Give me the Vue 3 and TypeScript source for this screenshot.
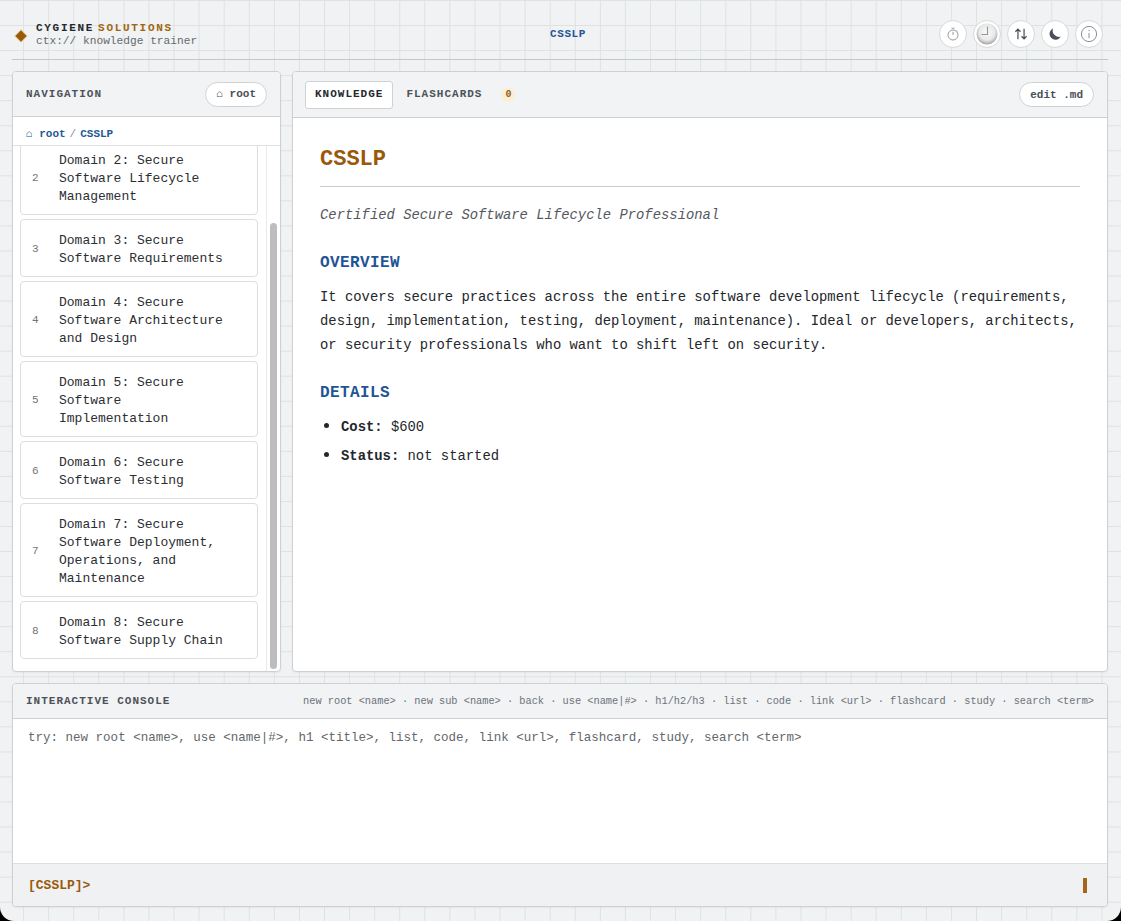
<script setup lang="ts">
import { computed, onMounted, ref } from 'vue'

interface Domain {
  id: number
  title: string
}

const domains: Domain[] = [
  { id: 1, title: 'Domain 1: Secure Software Concepts' },
  { id: 2, title: 'Domain 2: Secure Software Lifecycle Management' },
  { id: 3, title: 'Domain 3: Secure Software Requirements' },
  { id: 4, title: 'Domain 4: Secure Software Architecture and Design' },
  { id: 5, title: 'Domain 5: Secure Software Implementation' },
  { id: 6, title: 'Domain 6: Secure Software Testing' },
  { id: 7, title: 'Domain 7: Secure Software Deployment, Operations, and Maintenance' },
  { id: 8, title: 'Domain 8: Secure Software Supply Chain' }
]

const hints = [
  'new root <name>',
  'new sub <name>',
  'back',
  'use <name|#>',
  'h1/h2/h3',
  'list',
  'code',
  'link <url>',
  'flashcard',
  'study',
  'search <term>'
]

const listRef = ref<HTMLElement>()
const railRef = ref<HTMLElement>()
const scroll = ref({ top: 0, client: 1, total: 1, rail: 0 })

const syncThumb = () => {
  const el = listRef.value
  if (!el || !railRef.value) return
  scroll.value = {
    top: el.scrollTop,
    client: el.clientHeight,
    total: el.scrollHeight,
    rail: railRef.value.clientHeight - 4
  }
}

const thumbStyle = computed(() => ({
  height: `${(scroll.value.client / scroll.value.total) * scroll.value.rail}px`,
  marginTop: `${(scroll.value.top / scroll.value.total) * scroll.value.rail}px`
}))

onMounted(() => {
  if (listRef.value) listRef.value.scrollTop = listRef.value.scrollHeight
  syncThumb()
})
</script>

<template>
  <div class="shell">
    <header class="topbar">
      <div class="brand">
        <span class="diamond"></span>
        <div>
          <div class="brand-name">CYGIENE<span class="accent">SOLUTIONS</span></div>
          <div class="brand-sub">ctx:// knowledge trainer</div>
        </div>
      </div>
      <div class="crumb-center">CSSLP</div>
      <div class="tools">
        <button class="tool">
          <svg width="14" height="14" viewBox="0 0 14 14" fill="none" stroke="#8a8f94" stroke-width="0.9">
            <circle cx="7" cy="8" r="5" />
            <path d="M5.5 1.2h3M7 8V4.8M10.8 3.4l.9.9" />
          </svg>
        </button>
        <button class="tool">
          <svg width="24" height="24" viewBox="0 0 24 24">
            <defs>
              <radialGradient id="clockFace" cx="50%" cy="42%" r="58%">
                <stop offset="0%" stop-color="#fbfbfb" />
                <stop offset="65%" stop-color="#e8e8e8" />
                <stop offset="100%" stop-color="#a3a3a3" />
              </radialGradient>
            </defs>
            <circle cx="12" cy="12" r="10.5" fill="url(#clockFace)" />
            <path d="M12.5 4.5v8H6.5" fill="none" stroke="#989898" stroke-width="1.2" />
          </svg>
        </button>
        <button class="tool">
          <svg width="14" height="14" viewBox="0 0 16 16" fill="none" stroke="#4a4f57" stroke-width="1.4">
            <path d="M4.5 14V2.5M1.6 5.4l2.9-3 2.9 3M11.5 2v11.5M8.6 10.6l2.9 3 2.9-3" />
          </svg>
        </button>
        <button class="tool">
          <svg width="14" height="14" viewBox="0 0 14 14">
            <path d="M5.2 1.2A6 6 0 1 0 12.8 9.6 6.2 6.2 0 0 1 5.2 1.2Z" fill="#4a4f5c" />
          </svg>
        </button>
        <button class="tool">
          <svg width="18" height="18" viewBox="0 0 18 18" fill="none" stroke="#7d8287" stroke-width="0.9">
            <circle cx="9" cy="9" r="7.6" />
            <path d="M9 8v5.2M9 5v1.1" />
          </svg>
        </button>
      </div>
    </header>

    <div class="workspace">
      <aside class="panel nav">
        <div class="panel-head nav-head">
          <span class="label">NAVIGATION</span>
          <button class="pill">⌂ root</button>
        </div>
        <div class="breadcrumb">
          <span>⌂ root</span><span class="sep">/</span><span>CSSLP</span>
        </div>
        <div class="list-wrap">
          <div ref="listRef" class="list" @scroll="syncThumb">
            <div v-for="d in domains" :key="d.id" class="item">
              <span class="num">{{ d.id }}</span>
              <span class="item-title">{{ d.title }}</span>
            </div>
          </div>
          <div ref="railRef" class="rail">
            <div class="thumb" :style="thumbStyle"></div>
          </div>
        </div>
      </aside>

      <main class="panel main">
        <div class="panel-head main-head">
          <div class="tabs">
            <span class="tab active">KNOWLEDGE</span>
            <span class="tab">FLASHCARDS</span>
            <span class="badge">0</span>
          </div>
          <button class="pill">edit .md</button>
        </div>
        <article class="doc">
          <h1>CSSLP</h1>
          <p class="subtitle">Certified Secure Software Lifecycle Professional</p>
          <h2>OVERVIEW</h2>
          <p>
            It covers secure practices across the entire software development lifecycle (requirements,
            design, implementation, testing, deployment, maintenance). Ideal or developers, architects,
            or security professionals who want to shift left on security.
          </p>
          <h2>DETAILS</h2>
          <ul>
            <li><strong>Cost:</strong> $600</li>
            <li><strong>Status:</strong> not started</li>
          </ul>
        </article>
      </main>
    </div>

    <section class="panel console">
      <div class="panel-head console-head">
        <span class="label">INTERACTIVE CONSOLE</span>
        <span class="hints">{{ hints.join(' · ') }}</span>
      </div>
      <div class="output">try: new root &lt;name&gt;, use &lt;name|#&gt;, h1 &lt;title&gt;, list, code, link &lt;url&gt;, flashcard, study, search &lt;term&gt;</div>
      <div class="prompt">
        <span>[CSSLP]&gt;</span>
        <span class="cursor"></span>
      </div>
    </section>
  </div>
</template>

<style>
html,
body {
  margin: 0;
  background: #000;
}
</style>

<style scoped>
.shell {
  box-sizing: border-box;
  height: 921px;
  padding: 0 13px 14px 12px;
  display: flex;
  flex-direction: column;
  border-radius: 0 0 14px 14px;
  overflow: hidden;
  background-color: #f0f2f3;
  background-image:
    linear-gradient(to right, #dde2e3 1px, transparent 1px),
    linear-gradient(to bottom, #dde2e3 1px, transparent 1px);
  background-size: 25.08px 25.06px;
  background-position: -2px 0;
  font-family: 'Liberation Mono', 'DejaVu Sans Mono', monospace;
  color: #24272c;
}

.topbar {
  flex: none;
  height: 50px;
  margin-bottom: 11px;
  padding-top: 9px;
  border-bottom: 1px solid #c3c7ca;
  display: grid;
  grid-template-columns: 1fr auto 1fr;
  align-items: center;
}

.brand {
  display: flex;
  align-items: center;
  gap: 11px;
  padding: 1px 0 0 5px;
}

.diamond {
  width: 8px;
  height: 8px;
  margin-top: 3px;
  background: #99590a;
  transform: rotate(45deg);
  box-shadow: 0 0 0 1px #f2d9ae;
}

.brand-name {
  font-size: 11px;
  font-weight: 700;
  letter-spacing: 1.7px;
  line-height: 14px;
}

.accent {
  margin-left: 4px;
  color: #a0660f;
}

.brand-sub {
  font-size: 11.2px;
  line-height: 13px;
  color: #666a70;
}

.crumb-center {
  padding-left: 16px;
  font-size: 11px;
  font-weight: 700;
  letter-spacing: 0.6px;
  color: #1f5596;
}

.tools {
  display: flex;
  justify-content: flex-end;
  gap: 6px;
  padding-right: 5px;
}

.tool {
  width: 28px;
  height: 28px;
  padding: 0;
  display: flex;
  align-items: center;
  justify-content: center;
  background: #fff;
  border: 1px solid #d6d8da;
  border-radius: 50%;
}

.workspace {
  flex: 1;
  min-height: 0;
  display: flex;
  gap: 11px;
  margin-bottom: 11px;
}

.panel {
  box-sizing: border-box;
  background: #fff;
  border: 1px solid #ced1d4;
  border-radius: 4px;
  overflow: hidden;
  box-shadow: 0 1px 2px rgba(0, 0, 0, 0.05);
}

.panel-head {
  display: flex;
  align-items: center;
  justify-content: space-between;
  background: #f1f3f5;
  border-bottom: 1px solid #ced1d4;
  box-sizing: border-box;
}

.label {
  font-size: 11px;
  font-weight: 700;
  letter-spacing: 1px;
  color: #4d5258;
}

.pill {
  height: 25px;
  padding: 0 10px;
  font-family: inherit;
  font-size: 11px;
  font-weight: 700;
  color: #4a4f55;
  background: #fff;
  border: 1px solid #cfd2d5;
  border-radius: 13px;
}

.nav {
  width: 269px;
  flex: none;
  display: flex;
  flex-direction: column;
}

.nav-head {
  height: 45px;
  flex: none;
  padding: 0 13px;
}

.breadcrumb {
  height: 29px;
  flex: none;
  box-sizing: border-box;
  padding: 5px 13px 0;
  display: flex;
  align-items: center;
  font-size: 11px;
  font-weight: 700;
  color: #235a93;
  border-bottom: 1px solid #dfe2e4;
}

.sep {
  margin: 0 4px;
  font-weight: 400;
  color: #8d9196;
}

.list-wrap {
  flex: 1;
  min-height: 0;
  display: flex;
}

.list {
  flex: 1;
  min-width: 0;
  overflow-y: auto;
  scrollbar-width: none;
  box-sizing: border-box;
  padding: 19px 8px 12px 7px;
  display: flex;
  flex-direction: column;
  gap: 4px;
}

.rail {
  flex: none;
  width: 14px;
  box-sizing: border-box;
  padding: 2px 3px;
  border-left: 1px solid #e8eaec;
}

.thumb {
  background: #bdbdbd;
  border-radius: 4px;
}

.item {
  flex: none;
  display: flex;
  align-items: center;
  padding: 12px 28px 8px 11px;
  background: #fff;
  border: 1px solid #dcdfe1;
  border-radius: 4px;
}

.num {
  flex: none;
  width: 27px;
  margin-top: -2px;
  font-size: 11px;
  color: #6f747a;
}

.item-title {
  font-size: 13px;
  line-height: 18px;
  color: #2b2e33;
}

.main {
  flex: 1;
  min-width: 0;
}

.main-head {
  height: 46px;
  padding: 0 13px 0 12px;
}

.tabs {
  display: flex;
  align-items: center;
}

.tab {
  padding: 5px 9px 7px;
  font-size: 11px;
  font-weight: 700;
  letter-spacing: 1px;
  line-height: 14px;
  color: #4d5258;
  border: 1px solid transparent;
  border-radius: 3px;
}

.tab.active {
  margin-right: 3px;
  color: #24272c;
  background: #fff;
  border-color: #cfd2d5;
}

.badge {
  width: 14px;
  height: 14px;
  margin-left: 9px;
  font-size: 10px;
  font-weight: 700;
  line-height: 14px;
  text-align: center;
  color: #8a6420;
  background: #fbeed4;
  border-radius: 50%;
}

.doc {
  padding: 28px 27px 0;
  font-size: 13.86px;
  line-height: 24px;
}

.doc h1 {
  margin: 0;
  padding-bottom: 12px;
  font-size: 22px;
  line-height: 28px;
  color: #99590a;
  border-bottom: 1px solid #c9ccce;
}

.doc p {
  margin: 0;
}

.doc .subtitle {
  margin-top: 16px;
  margin-bottom: 1px;
  font-style: italic;
  color: #54585e;
}

.doc h2 {
  margin: 24px 0 10px;
  font-size: 16px;
  line-height: 24px;
  letter-spacing: 0.4px;
  color: #1f5596;
}

.doc ul {
  margin: -1px 0 0;
  padding: 0 0 0 21px;
}

.doc li {
  height: 24px;
  margin-bottom: 5px;
}

.doc li::marker {
  font-size: 18px;
}

.console {
  height: 224px;
  flex: none;
  display: flex;
  flex-direction: column;
}

.console-head {
  height: 35px;
  flex: none;
  padding: 0 13px;
}

.hints {
  font-size: 10.3px;
  color: #6d7278;
  white-space: nowrap;
}

.output {
  flex: 1;
  padding: 10px 15px;
  font-size: 12.53px;
  line-height: 18px;
  color: #63676d;
}

.prompt {
  height: 43px;
  flex: none;
  box-sizing: border-box;
  display: flex;
  align-items: center;
  justify-content: space-between;
  padding: 0 20px 0 15px;
  font-size: 13px;
  font-weight: 700;
  color: #99590a;
  background: #f0f1f2;
  border-top: 1px solid #dcdfe1;
}

.cursor {
  width: 4px;
  height: 15px;
  background: #a5661a;
}
</style>
